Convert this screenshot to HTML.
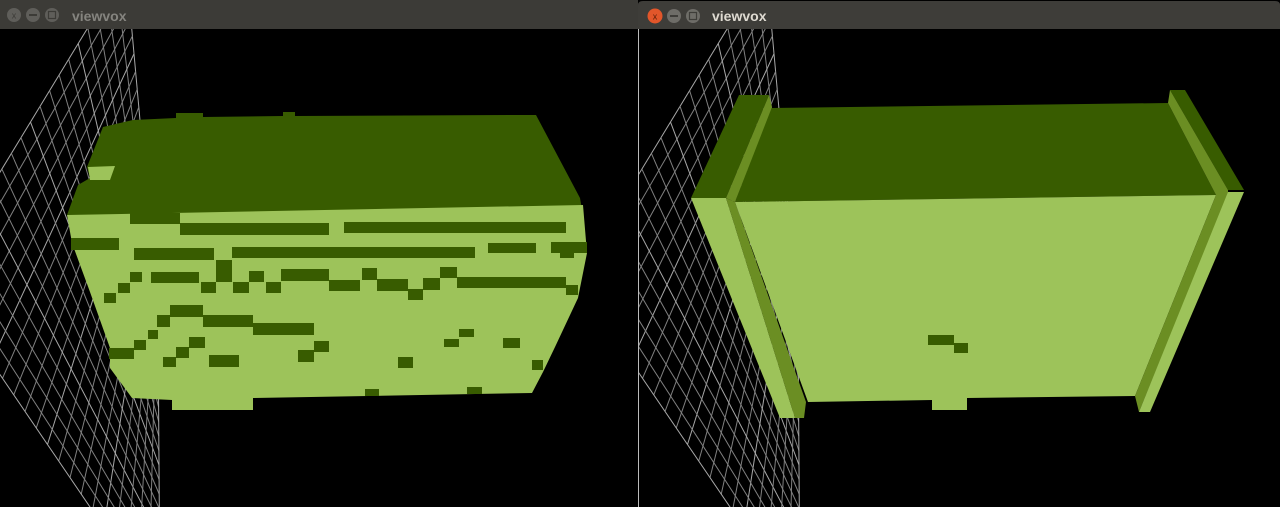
<!DOCTYPE html>
<html><head><meta charset="utf-8"><style>
html,body{margin:0;padding:0;background:#000;width:1280px;height:507px;overflow:hidden}
svg{display:block}
</style></head><body>
<svg id="s" width="1280" height="507" viewBox="0 0 1280 507" xmlns="http://www.w3.org/2000/svg">
<defs>
<clipPath id="c1"><rect x="0" y="29" width="638" height="478"/></clipPath>
<clipPath id="c2"><rect x="639" y="29" width="641" height="478"/></clipPath>
</defs>
<rect width="1280" height="507" fill="#000"/>
<g id="grid1" clip-path="url(#c1)" stroke="#808080" stroke-width="1" fill="none"></g>
<g id="grid2" clip-path="url(#c2)" stroke="#808080" stroke-width="1" fill="none"></g>
<!-- Left shape -->
<g>
<polygon fill="#385c00" points="103,127 133,120 176,118 176,113 203,113 203,117 283,116 283,112 295,112 295,116 522,115 536,115 580,198 583,215 67,215 78,185 90,178 87,167"/>
<polygon fill="#9dc35a" points="67,215 583,205 587,253 578,298 555,347 543,372 532,393 253,398 253,410 172,410 172,400 132,398 110,368 110,348 90,292 72,243"/>
<g fill="#385c00">
<rect x="130" y="213" width="50" height="11"/><rect x="180" y="223" width="149" height="12"/><rect x="344" y="222" width="222" height="11"/>
<rect x="71" y="238" width="48" height="12"/><rect x="134" y="248" width="80" height="12"/><rect x="232" y="247" width="243" height="11"/><rect x="488" y="243" width="48" height="10"/><rect x="551" y="242" width="36" height="11"/>
<rect x="151" y="272" width="48" height="11"/><rect x="281" y="269" width="48" height="12"/><rect x="216" y="260" width="16" height="22"/><rect x="329" y="280" width="31" height="11"/><rect x="377" y="279" width="31" height="12"/><rect x="457" y="277" width="109" height="11"/><rect x="249" y="271" width="15" height="11"/><rect x="362" y="268" width="15" height="12"/><rect x="440" y="267" width="17" height="11"/><rect x="423" y="278" width="17" height="12"/><rect x="408" y="289" width="15" height="11"/><rect x="201" y="282" width="15" height="11"/><rect x="233" y="282" width="16" height="11"/><rect x="266" y="282" width="15" height="11"/>
<rect x="130" y="272" width="12" height="10"/><rect x="118" y="283" width="12" height="10"/><rect x="104" y="293" width="12" height="10"/>
<rect x="170" y="305" width="33" height="12"/><rect x="203" y="315" width="50" height="12"/><rect x="253" y="323" width="61" height="12"/><rect x="157" y="315" width="13" height="12"/>
<rect x="109" y="348" width="25" height="11"/><rect x="209" y="355" width="30" height="12"/><rect x="298" y="350" width="16" height="12"/><rect x="314" y="341" width="15" height="11"/><rect x="189" y="337" width="16" height="11"/><rect x="176" y="347" width="13" height="11"/><rect x="163" y="357" width="13" height="10"/><rect x="134" y="340" width="12" height="10"/><rect x="148" y="330" width="10" height="9"/>
<rect x="398" y="357" width="15" height="11"/><rect x="444" y="339" width="15" height="8"/><rect x="459" y="329" width="15" height="8"/><rect x="503" y="338" width="17" height="10"/><rect x="532" y="360" width="11" height="10"/><rect x="365" y="389" width="14" height="7"/><rect x="467" y="387" width="15" height="7"/>
<rect x="566" y="285" width="12" height="10"/><rect x="560" y="250" width="14" height="8"/>
</g>
<polygon fill="#9dc35a" points="88,167 115,166 110,180 90,180"/>
</g>
<!-- Right shape -->
<g>
<polygon fill="#385c00" points="771,108 1168,103 1216,195 735,202"/>
<polygon fill="#9dc35a" points="735,202 1216,195 1135,396 967,398 967,410 932,410 932,400 808,402"/>
<rect x="928" y="335" width="26" height="10" fill="#385c00"/><rect x="954" y="343" width="14" height="10" fill="#385c00"/>
<polygon fill="#385c00" points="739,95 769,95 726,198 691,198"/>
<polygon fill="#6b8e23" points="769,95 772,107 735,202 726,198"/>
<polygon fill="#9dc35a" points="691,198 726,198 795,418 780,418"/>
<polygon fill="#6b8e23" points="726,198 735,202 806,402 804,418 795,418"/>
<polygon fill="#385c00" points="1170,90 1185,90 1244,190 1228,190"/>
<polygon fill="#6b8e23" points="1168,103 1170,90 1228,190 1228,195 1139,412 1135,396 1216,195"/>
<polygon fill="#9dc35a" points="1228,192 1244,192 1150,412 1139,412"/>
</g>
<!-- title bars -->
<rect x="0" y="0" width="638" height="29" fill="#3c3b37"/>
<path d="M638,29 V5 Q638,1 643,1 H1275 Q1280,1 1280,5 V29 Z" fill="#3e3d39"/>
<rect x="638" y="29" width="1" height="478" fill="#bbb"/>
<circle cx="14" cy="15" r="7" fill="#5f5e5a"/><circle cx="33" cy="15" r="7" fill="#5f5e5a"/><circle cx="52" cy="15" r="7" fill="#5f5e5a"/>
<text x="14" y="18.5" font-family="Liberation Sans" font-size="9" fill="#3c3b37" text-anchor="middle">x</text>
<rect x="29" y="14" width="8" height="2" fill="#3c3b37"/><rect x="48.5" y="11.5" width="7" height="7" fill="none" stroke="#3c3b37" stroke-width="1.2"/>
<text x="72" y="21" font-family="Liberation Sans, sans-serif" font-weight="bold" font-size="14" fill="#85847f">viewvox</text>
<circle cx="655" cy="16" r="7.5" fill="#e2562a"/><circle cx="674" cy="16" r="7" fill="#6e6d68"/><circle cx="693" cy="16" r="7" fill="#6e6d68"/>
<text x="655" y="19.5" font-family="Liberation Sans" font-size="9" fill="#5a1d08" text-anchor="middle">x</text>
<rect x="670" y="15" width="8" height="2" fill="#3e3d39"/><rect x="689.5" y="12.5" width="7" height="7" fill="none" stroke="#3e3d39" stroke-width="1.2"/>
<text x="712" y="21" font-family="Liberation Sans, sans-serif" font-weight="bold" font-size="14" fill="#dfdbd2">viewvox</text>
</svg>
<script>
(function(){
 function grid(id,dx){
  var g=document.getElementById(id);
  var T=[126+dx,-35],R=[158+dx,320],B=[160+dx,610],L=[-65+dx,279];
  var n=20,h='';
  function lerp(a,b,t){return [a[0]+(b[0]-a[0])*t,a[1]+(b[1]-a[1])*t];}
  for(var i=0;i<=n;i++){var t=i/n;
   var col=(i%5==0)?' stroke="#a8a8a8"':'';
   var a=lerp(T,L,t),b=lerp(R,B,t);h+='<line'+col+' x1="'+a[0]+'" y1="'+a[1]+'" x2="'+b[0]+'" y2="'+b[1]+'"/>';
   a=lerp(T,R,t);b=lerp(L,B,t);h+='<line'+col+' x1="'+a[0]+'" y1="'+a[1]+'" x2="'+b[0]+'" y2="'+b[1]+'"/>';}
  g.innerHTML=h;
 }
 grid('grid1',0);grid('grid2',640);
})();
</script>
</body></html>
